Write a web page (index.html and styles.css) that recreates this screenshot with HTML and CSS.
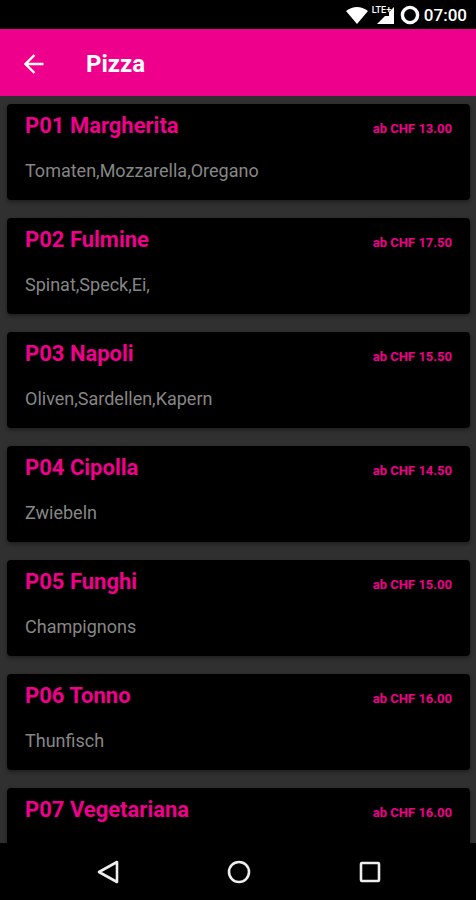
FILE: index.html
```html
<!DOCTYPE html>
<html lang="de">
<head>
    <meta charset="utf-8">
    <meta name="viewport" content="width=device-width, initial-scale=1">
    <title>Pizza</title>
    <link rel="stylesheet" href="styles.css">
</head>
<body>
    <div class="status-bar">
        <svg width="22" height="18" viewBox="0 0 22 18"><path d="M0 5Q11-3 22 5L11 18Z" fill="#fff"/></svg>
        <div class="signal">
            <svg width="18" height="17" viewBox="0 0 18 17"><path d="M18 0V17H1L9 9H13V5Z" fill="#fff"/></svg>
            <span class="lte">LTE+</span>
        </div>
        <svg class="ring" width="20" height="20" viewBox="0 0 20 20"><circle cx="10" cy="10" r="7.600" fill="none" stroke="#fff" stroke-width="3.400"/></svg>
        <span class="time">07:00</span>
    </div>

    <header class="toolbar">
        <button class="back" type="button" aria-label="Zurück">
            <svg width="20" height="20" viewBox="0 0 20 20"><path d="M19.500 10H2M10.500 1L1.500 10L10.500 19" fill="none" stroke="#fff" stroke-width="2.400"/></svg>
        </button>
        <h1>Pizza</h1>
    </header>

    <main class="list">
        <article class="card">
            <div class="card-top">
                <h2>P01 Margherita</h2>
                <span class="price">ab CHF 13.00</span>
            </div>
            <p>Tomaten,Mozzarella,Oregano</p>
        </article>
        <article class="card">
            <div class="card-top">
                <h2>P02 Fulmine</h2>
                <span class="price">ab CHF 17.50</span>
            </div>
            <p>Spinat,Speck,Ei,</p>
        </article>
        <article class="card">
            <div class="card-top">
                <h2>P03 Napoli</h2>
                <span class="price">ab CHF 15.50</span>
            </div>
            <p>Oliven,Sardellen,Kapern</p>
        </article>
        <article class="card">
            <div class="card-top">
                <h2>P04 Cipolla</h2>
                <span class="price">ab CHF 14.50</span>
            </div>
            <p>Zwiebeln</p>
        </article>
        <article class="card">
            <div class="card-top">
                <h2>P05 Funghi</h2>
                <span class="price">ab CHF 15.00</span>
            </div>
            <p>Champignons</p>
        </article>
        <article class="card">
            <div class="card-top">
                <h2>P06 Tonno</h2>
                <span class="price">ab CHF 16.00</span>
            </div>
            <p>Thunfisch</p>
        </article>
        <article class="card">
            <div class="card-top">
                <h2>P07 Vegetariana</h2>
                <span class="price">ab CHF 16.00</span>
            </div>
        </article>
    </main>

    <nav class="nav-bar">
        <button type="button" aria-label="Zurück">
            <svg width="24" height="24" viewBox="0 0 24 24"><path d="M21 2V22L3 12Z" fill="none" stroke="#eee" stroke-width="2.600" stroke-linejoin="round"/></svg>
        </button>
        <button type="button" aria-label="Startseite">
            <svg width="24" height="24" viewBox="0 0 24 24"><circle cx="12" cy="12" r="10" fill="none" stroke="#eee" stroke-width="2.600"/></svg>
        </button>
        <button type="button" aria-label="Übersicht">
            <svg width="24" height="24" viewBox="0 0 24 24"><rect x="3" y="3" width="18" height="18" rx="1" fill="none" stroke="#eee" stroke-width="2.600"/></svg>
        </button>
    </nav>
</body>
</html>
```

FILE: styles.css
```css
* {
    box-sizing: border-box;
}
body {
    margin: 0;
    height: 100vh;
    display: flex;
    flex-direction: column;
    background-color: #303030;
    font-family: Roboto, sans-serif;
    color: #fff;
}
h1, h2, p {
    margin: 0;
}
button {
    padding: 0;
    border: none;
    background: none;
    cursor: pointer;
}
svg {
    display: block;
}
.status-bar {
    flex: none;
    height: 29px;
    padding: 1px 9px 0 0;
    display: flex;
    align-items: center;
    justify-content: flex-end;
    gap: 4px;
    background-color: #000;
}
.signal {
    position: relative;
    padding-left: 4px;
}
/* network label sits over the signal triangle */
.lte {
    position: absolute;
    top: -1px;
    left: 0;
    font-size: 9px;
    line-height: 9px;
    font-weight: 500;
}
.ring {
    margin-left: 2px;
}
.time {
    font-size: 17px;
    line-height: 24px;
    font-weight: 500;
}
.toolbar {
    flex: none;
    height: 67px;
    padding: 2px 24px 0;
    display: flex;
    align-items: center;
    gap: 42px;
    background-color: #ef008c;
}
.toolbar h1 {
    font-size: 24px;
    line-height: 32px;
    font-weight: 700;
}
.list {
    flex: 1;
    min-height: 0;
    overflow: hidden;
    padding: 8px 6px 0 7px;
    display: flex;
    flex-direction: column;
    gap: 18px;
}
.card {
    flex: none;
    min-height: 96px;
    padding: 8px 18px;
    border-radius: 4px;
    background-color: #000;
    box-shadow: 0 2px 4px rgba(0, 0, 0, 0.4);
}
.card-top {
    display: flex;
    justify-content: space-between;
    align-items: baseline;
    color: #ef008c;
}
.card h2 {
    font-size: 22px;
    line-height: 28px;
    font-weight: 700;
}
.price {
    font-size: 13px;
    line-height: 16px;
    font-weight: 700;
}
.card p {
    margin-top: 19px;
    font-size: 18px;
    line-height: 24px;
    color: #868686;
}
.nav-bar {
    flex: none;
    height: 57px;
    padding: 1px 41px 0 43px;
    display: grid;
    grid-template-columns: repeat(3, 1fr);
    justify-items: center;
    align-items: center;
    background-color: #000;
}
```
